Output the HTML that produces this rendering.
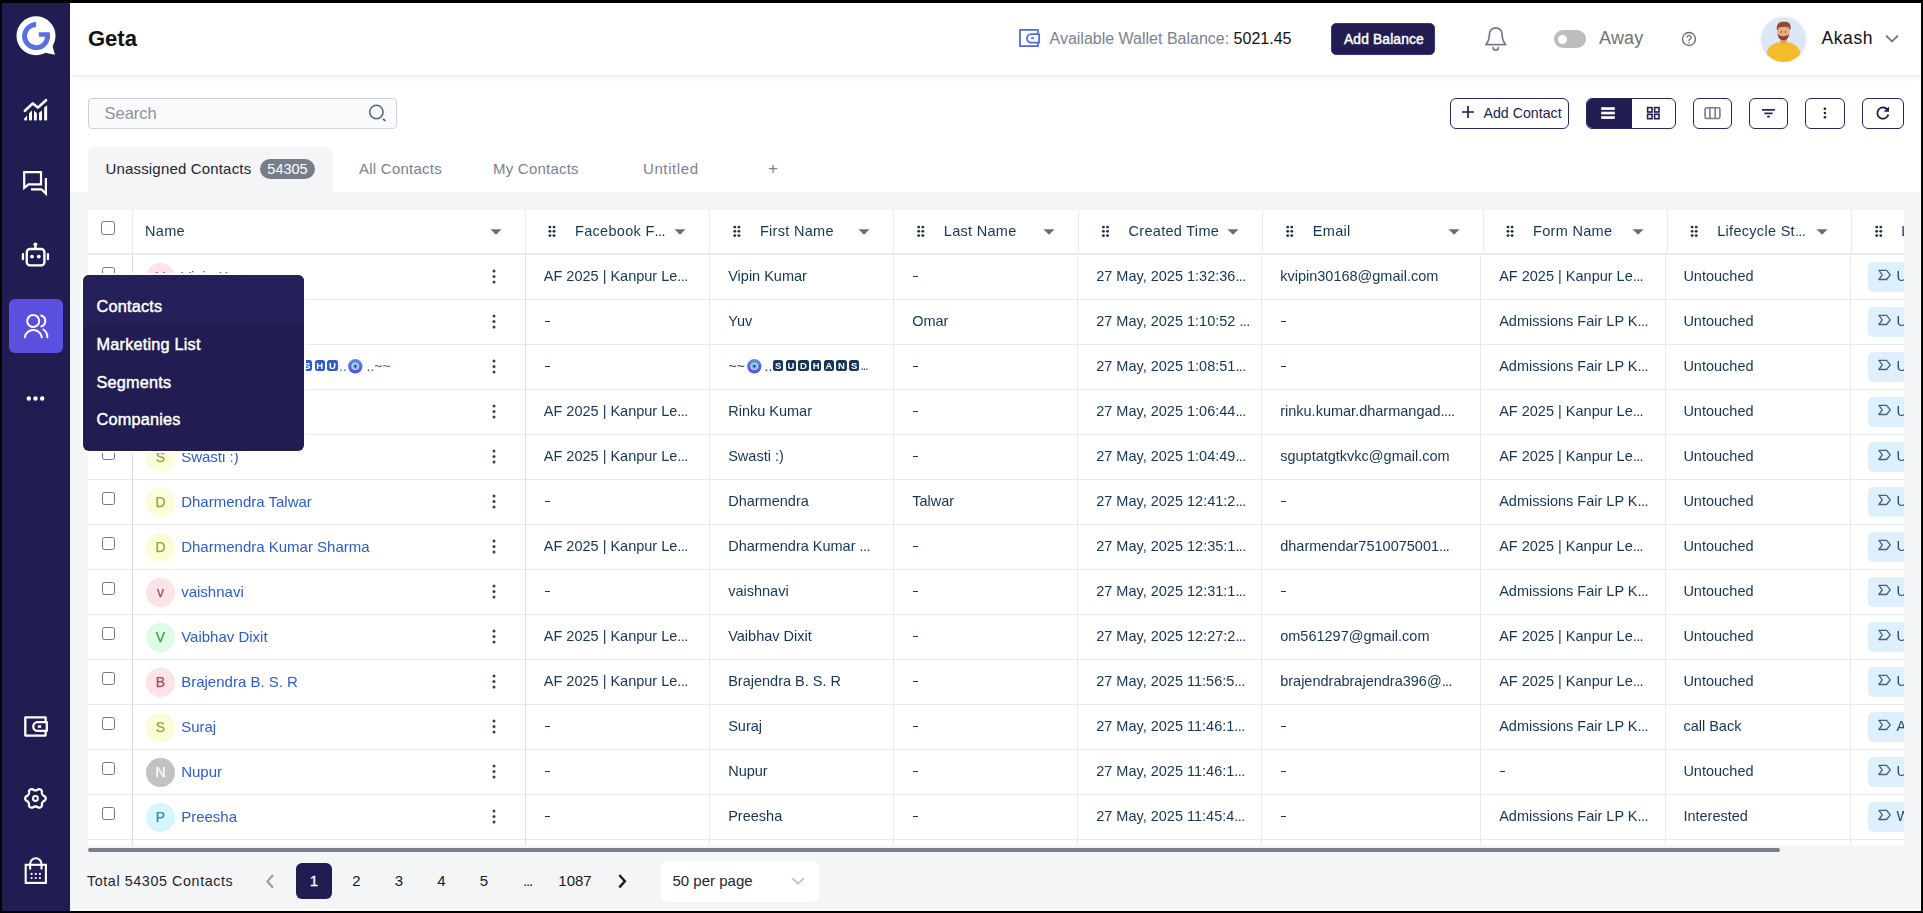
<!DOCTYPE html>
<html><head><meta charset="utf-8">
<style>
*{box-sizing:border-box;margin:0;padding:0}
html,body{width:1923px;height:913px;overflow:hidden;background:#000}
body{font-family:"Liberation Sans",sans-serif;color:#22324a;position:relative}
.a{position:absolute}
.t{position:absolute;white-space:nowrap;line-height:1}
.btn{position:absolute;border:1px solid #2b2662;border-radius:6px;background:#fff}
.c{position:absolute;white-space:nowrap;font-size:14px;line-height:16px;color:#163555}
svg{position:absolute;overflow:visible}
</style></head><body>

<div class="a" style="left:2px;top:2.5px;width:1919px;height:908px;background:#f4f5f7"></div>
<div class="a" style="left:70px;top:909.2px;width:1851px;height:1.3px;background:#fff"></div>
<div class="a" style="left:1920px;top:75px;width:1px;height:835px;background:#fff"></div>
<div class="a" style="left:2px;top:2.5px;width:68px;height:908px;background:#211c52"></div>
<div class="a" style="left:70px;top:75px;width:1851px;height:117px;background:#fff"></div>
<div class="a" style="left:70px;top:2.5px;width:1851px;height:72.5px;background:#fff;box-shadow:0 1px 6px rgba(0,0,0,.1)"></div>
<svg style="left:0;top:0" width="72" height="72" viewBox="0 0 72 72">
<circle cx="36" cy="35.8" r="19.5" fill="#fff"/>
<path d="M51.8 43.5L55 54.8L45 52.8Z" fill="#fff"/>
<path d="M36.1 22.1A14.0 14.0 0 1 0 49.57 32.3H38.8V36.8H45.17A9.1 9.1 0 1 1 36.1 27.0Z" fill="#5a6fe3"/>
</svg>
<svg style="left:0;top:0" width="72" height="140" viewBox="0 0 72 140">
<path d="M24.9 110.8L32.8 103.4L37.9 107.6L46 100.2" fill="none" stroke="#fff" stroke-width="2.6" stroke-linecap="round" stroke-linejoin="round"/>
<g fill="#fff">
<path d="M24.1 118.4L27.1 115.6V119.6a1 1 0 0 1-1 1h-1a1 1 0 0 1-1-1z"/>
<path d="M29 113.2L32 110.4V119.6a1 1 0 0 1-1 1h-1a1 1 0 0 1-1-1z"/>
<path d="M34 110.4L36.9 113.2V119.6a1 1 0 0 1-1 1h-1a1 1 0 0 1-1-1z"/>
<path d="M39 112.8L42 110.4V119.6a1 1 0 0 1-1 1h-1a1 1 0 0 1-1-1z"/>
<path d="M44.2 107.6L47.1 105.2V119.6a1 1 0 0 1-1 1h-1a1 1 0 0 1-1-1z"/>
</g></svg>
<svg style="left:0;top:150" width="72" height="60" viewBox="0 0 72 60">
<g fill="none" stroke="#fff" stroke-width="2.2" stroke-linejoin="miter">
<path d="M24.2 22.1h16.8v12.3h-12.5l-4.3 3.6z"/>
<path d="M45.9 28V43.6L41.4 39.3H31"/>
</g></svg>
<svg style="left:0;top:225" width="72" height="60" viewBox="0 0 72 60">
<g fill="none" stroke="#fff" stroke-width="2.4">
<rect x="26.8" y="24" width="17.6" height="16.4" rx="3.2"/>
<path d="M35.4 19.5v4.5"/>
</g>
<g fill="#fff">
<circle cx="35.4" cy="19.3" r="1.9"/>
<circle cx="32" cy="31.6" r="1.9"/><circle cx="38.8" cy="31.6" r="1.9"/>
<rect x="21.8" y="28" width="2.3" height="7.3" rx="1"/>
<rect x="46.8" y="28" width="2.3" height="7.3" rx="1"/>
</g></svg>
<div class="a" style="left:9px;top:299px;width:54px;height:54px;border-radius:6px;background:#5b4fdd"></div>
<svg style="left:0;top:300" width="72" height="60" viewBox="0 0 72 60">
<g fill="none" stroke="#fff" stroke-width="2" stroke-linecap="round">
<circle cx="33.2" cy="21" r="6"/>
<path d="M24.8 37.3a8.6 8.6 0 0 1 17 0"/>
<path d="M41.3 15.5a5.8 5.8 0 0 1 0 11"/>
<path d="M43.3 29.5a8.6 8.6 0 0 1 4 7.8"/>
</g></svg>
<svg style="left:0;top:390" width="72" height="20" viewBox="0 0 72 20">
<g fill="#fff"><circle cx="28.8" cy="8.5" r="2.2"/><circle cx="35.5" cy="8.5" r="2.2"/><circle cx="42.2" cy="8.5" r="2.2"/></g></svg>
<svg style="left:0;top:705" width="72" height="40" viewBox="0 0 72 40">
<g fill="none" stroke="#fff" stroke-width="2.3" stroke-linejoin="round">
<path d="M45.6 16.2V12.3H25.3V30.6H45.6V27"/>
<path d="M37.6 17.2h9.2v8.7H37.6a4.35 4.35 0 0 1 0-8.7z"/>
</g><rect x="37.8" y="20.3" width="3.4" height="2.5" fill="#fff"/></svg>
<svg style="left:0;top:0" width="72" height="830" viewBox="0 0 72 830">
<g fill="none" stroke="#fff" stroke-width="2.3" stroke-linejoin="round">
<path d="M45.70 798.45 L45.68 798.09 L45.61 797.74 L45.49 797.39 L45.33 797.06 L45.13 796.74 L44.87 796.45 L44.55 796.18 L44.03 795.99 L43.69 795.77 L43.41 795.55 L43.16 795.33 L42.94 795.11 L42.75 794.89 L42.57 794.66 L42.42 794.43 L42.29 794.18 L42.18 793.91 L42.09 793.63 L42.01 793.33 L41.94 793.00 L41.89 792.65 L41.87 792.25 L41.96 791.71 L41.90 791.29 L41.77 790.92 L41.59 790.59 L41.39 790.28 L41.14 790.01 L40.87 789.77 L40.58 789.57 L40.25 789.41 L39.91 789.30 L39.56 789.22 L39.19 789.20 L38.81 789.22 L38.43 789.29 L38.03 789.44 L37.61 789.79 L37.25 789.97 L36.92 790.11 L36.61 790.21 L36.31 790.29 L36.02 790.35 L35.73 790.39 L35.45 790.40 L35.17 790.39 L34.88 790.35 L34.59 790.29 L34.29 790.21 L33.98 790.11 L33.65 789.97 L33.29 789.79 L32.87 789.44 L32.47 789.29 L32.09 789.22 L31.71 789.20 L31.34 789.22 L30.99 789.30 L30.65 789.41 L30.33 789.57 L30.03 789.77 L29.76 790.01 L29.51 790.28 L29.31 790.59 L29.13 790.92 L29.00 791.29 L28.94 791.71 L29.03 792.25 L29.01 792.65 L28.96 793.00 L28.89 793.33 L28.81 793.63 L28.72 793.91 L28.61 794.18 L28.48 794.43 L28.33 794.66 L28.15 794.89 L27.96 795.11 L27.74 795.33 L27.49 795.55 L27.21 795.77 L26.87 795.99 L26.35 796.18 L26.03 796.45 L25.77 796.74 L25.57 797.06 L25.41 797.39 L25.29 797.74 L25.22 798.09 L25.20 798.45 L25.22 798.81 L25.29 799.16 L25.41 799.51 L25.57 799.84 L25.77 800.16 L26.03 800.45 L26.35 800.72 L26.87 800.91 L27.21 801.13 L27.49 801.35 L27.74 801.57 L27.96 801.79 L28.15 802.01 L28.33 802.24 L28.48 802.48 L28.61 802.72 L28.72 802.99 L28.81 803.27 L28.89 803.57 L28.96 803.90 L29.01 804.25 L29.03 804.65 L28.94 805.19 L29.00 805.61 L29.13 805.98 L29.31 806.31 L29.51 806.62 L29.76 806.89 L30.03 807.13 L30.32 807.33 L30.65 807.49 L30.99 807.60 L31.34 807.68 L31.71 807.70 L32.09 807.68 L32.47 807.61 L32.87 807.46 L33.29 807.11 L33.65 806.93 L33.98 806.79 L34.29 806.69 L34.59 806.61 L34.88 806.55 L35.17 806.51 L35.45 806.50 L35.73 806.51 L36.02 806.55 L36.31 806.61 L36.61 806.69 L36.92 806.79 L37.25 806.93 L37.61 807.11 L38.03 807.46 L38.43 807.61 L38.81 807.68 L39.19 807.70 L39.56 807.68 L39.91 807.60 L40.25 807.49 L40.58 807.33 L40.87 807.13 L41.14 806.89 L41.39 806.62 L41.59 806.31 L41.77 805.98 L41.90 805.61 L41.96 805.19 L41.87 804.65 L41.89 804.25 L41.94 803.90 L42.01 803.57 L42.09 803.27 L42.18 802.99 L42.29 802.72 L42.42 802.48 L42.57 802.24 L42.75 802.01 L42.94 801.79 L43.16 801.57 L43.41 801.35 L43.69 801.13 L44.03 800.91 L44.55 800.72 L44.87 800.45 L45.13 800.16 L45.33 799.84 L45.49 799.51 L45.61 799.16 L45.68 798.81Z"/>
<circle cx="35.45" cy="798.45" r="2.45" stroke-width="2"/>
</g></svg>
<svg style="left:0;top:850" width="72" height="40" viewBox="0 0 72 40">
<g fill="none" stroke="#fff" stroke-width="2.1">
<rect x="25.7" y="14.8" width="20.2" height="18.1"/>
<path d="M30.1 19.4V14a5.7 5.7 0 0 1 11.4 0v5.4"/>
</g>
<g fill="#fff">
<circle cx="31.6" cy="23.9" r="1.1"/><circle cx="35.8" cy="23.9" r="1.1"/><circle cx="39.9" cy="23.9" r="1.1"/>
<circle cx="31.6" cy="28" r="1.1"/><circle cx="35.8" cy="28" r="1.1"/><circle cx="39.9" cy="28" r="1.1"/>
</g></svg>
<div class="t" style="left:88px;top:27.5px;font-size:22px;font-weight:bold;color:#111">Geta</div>
<svg style="left:1018;top:28" width="24" height="22" viewBox="0 0 24 22">
<g fill="none" stroke="#4e68e2" stroke-width="1.75" stroke-linejoin="round">
<path d="M19.95 5.6V1.95H1.95V18.15H19.95V14.2"/>
<path d="M13.2 6.05H21.15V14.55H13.2A4.25 4.25 0 0 1 13.2 6.05Z"/>
</g><rect x="13.1" y="9.3" width="2.8" height="1.8" fill="#4e68e2"/></svg>
<div class="t" style="left:1049.5px;top:31px;font-size:16px;color:#7b8191">Available Wallet Balance: <span style="color:#111">5021.45</span></div>
<div class="a" style="left:1331px;top:23px;width:104px;height:32px;border-radius:5px;background:#211c52;border:1px solid #3a3580"></div>
<div class="t" style="left:1344px;top:33px;font-size:13.8px;letter-spacing:.15px;-webkit-text-stroke:.45px #fff;color:#fff">Add Balance</div>
<svg style="left:1480;top:24" width="30" height="30" viewBox="0 0 30 30">
<g fill="none" stroke="#787896" stroke-width="1.75" stroke-linejoin="round" stroke-linecap="round">
<path d="M5.9 20.5H25.7C23.2 17.8 22.3 15 22.1 11V10.2A6.35 6.35 0 0 0 9.4 10.2V11C9.2 15 8.4 17.8 5.9 20.5Z"/>
<path d="M13.1 23.6A2.65 2.65 0 0 0 18.4 23.6"/>
</g></svg>
<div class="a" style="left:1554px;top:30px;width:31.5px;height:18px;border-radius:9px;background:#bdbdbd"></div>
<div class="a" style="left:1557.7px;top:34.7px;width:9.5px;height:9.5px;border-radius:5px;background:#fff"></div>
<div class="t" style="left:1599px;top:29px;font-size:18px;letter-spacing:.2px;color:#727272">Away</div>
<svg style="left:1680;top:31" width="18" height="18" viewBox="0 0 18 18">
<circle cx="9" cy="8" r="6.5" fill="none" stroke="#6a6a6e" stroke-width="1.3"/>
<path d="M7 6.4a2.05 2.05 0 1 1 3 1.9c-.65.4-1 .75-1 1.5v.3" fill="none" stroke="#6a6a6e" stroke-width="1.3"/>
<circle cx="9" cy="11.7" r=".8" fill="#6a6a6e"/></svg>
<div class="a" style="left:1761px;top:17px;width:45px;height:45px;border-radius:50%;box-shadow:0 0 4px rgba(0,0,0,.08)"></div>
<svg style="left:1761;top:17" width="45" height="45" viewBox="0 0 45 45">
<defs><clipPath id="avc"><circle cx="22.5" cy="22.5" r="22.4"/></clipPath></defs>
<circle cx="22.5" cy="22.5" r="22.4" fill="#dbe7f5"/>
<g clip-path="url(#avc)">
<path d="M5.5 46L5.5 37C6.5 29.5 12 26 19 25L22.5 26.5L26 25C33 26 38.5 29.5 39.5 37L39.5 46Z" fill="#f4bb2a"/>
<path d="M19.2 20h6.6v5.6l-3.3 1.6l-3.3-1.6z" fill="#e39a72"/>
<ellipse cx="22.4" cy="15.5" rx="6.2" ry="7.4" fill="#f0ab85"/>
<path d="M15.8 12.5C15.3 6.5 18.5 4.8 22.5 4.8C27 4.5 30.2 6 29.6 11.8L28.8 13.5C28.6 10.2 26 9.6 22.5 9.9C19 9.9 16.9 10.3 16.6 13.5Z" fill="#8d4b2d"/>
<path d="M16.9 16.8C16.9 21.5 19.5 23.3 22.4 23.3C25.3 23.3 27.9 21.5 27.9 16.8C26.6 18.9 24.5 19.2 22.4 19.2C20.3 19.2 18.2 18.9 16.9 16.8Z" fill="#8a452e"/>
<circle cx="20.3" cy="15" r=".65" fill="#3a2a22"/><circle cx="24.5" cy="15" r=".65" fill="#3a2a22"/>
</g></svg>
<div class="t" style="left:1821.5px;top:30px;font-size:17.5px;letter-spacing:.6px;color:#111">Akash</div>
<svg style="left:1880;top:30" width="24" height="20" viewBox="0 0 24 20">
<path d="M6 5.5l6 6l6-6" fill="none" stroke="#777c8c" stroke-width="1.8"/></svg>
<div class="a" style="left:88px;top:98px;width:309px;height:30.5px;border:1px solid #cfd2d9;border-radius:4px;background:#f9fafb"></div>
<div class="t" style="left:104.5px;top:104.5px;font-size:16.5px;color:#8d919b">Search</div>
<svg style="left:366;top:102" width="24" height="24" viewBox="0 0 24 24">
<circle cx="10.4" cy="10" r="6.65" fill="none" stroke="#5a6075" stroke-width="1.5"/>
<path d="M17 17L19.4 18.9" stroke="#5a6075" stroke-width="1.8"/></svg>
<div class="btn" style="left:1450px;top:98px;width:119px;height:30.5px"></div>
<svg style="left:1460;top:104" width="16" height="16" viewBox="0 0 16 16">
<path d="M8 2v12M2 8h12" stroke="#211c52" stroke-width="1.7"/></svg>
<div class="t" style="left:1483.5px;top:105.5px;font-size:14.2px;color:#211c52">Add Contact</div>
<div class="btn" style="left:1586px;top:98px;width:90px;height:30.5px;overflow:hidden"><div class="a" style="left:0;top:0;width:44.5px;height:30px;background:#211c52"></div></div>
<svg style="left:1598;top:103" width="20" height="20" viewBox="0 0 20 20">
<g fill="#fff"><rect x="3.2" y="4.2" width="13.6" height="2.7"/><rect x="3.2" y="8.7" width="13.6" height="2.7"/><rect x="3.2" y="13.2" width="13.6" height="2.7"/></g></svg>
<svg style="left:1643;top:103" width="20" height="20" viewBox="0 0 20 20">
<g fill="none" stroke="#211c52" stroke-width="1.6"><rect x="4.6" y="4.6" width="4.4" height="4.4"/><rect x="11.6" y="4.6" width="4.4" height="4.4"/><rect x="4.6" y="11.3" width="4.4" height="4.4"/><rect x="11.6" y="11.3" width="4.4" height="4.4"/></g></svg>
<div class="btn" style="left:1693px;top:98px;width:39px;height:30.5px"></div>
<svg style="left:1702;top:103" width="22" height="20" viewBox="0 0 22 20">
<g fill="none" stroke="#7b7896" stroke-width="1.6"><rect x="3.1" y="4.8" width="14.8" height="10.7" rx="1.5"/><path d="M7.9 4.8v10.7M13.2 4.8v10.7"/></g></svg>
<div class="btn" style="left:1749px;top:98px;width:39px;height:30.5px"></div>
<svg style="left:1758;top:103" width="22" height="20" viewBox="0 0 22 20">
<g stroke="#2b2660" stroke-width="1.7"><path d="M4 6.9h12.9M6.4 10.3h8.2M9.2 13.7h2.7"/></g></svg>
<div class="btn" style="left:1805px;top:98px;width:39.5px;height:30.5px"></div>
<svg style="left:1814;top:103" width="22" height="20" viewBox="0 0 22 20">
<g fill="#211c52"><circle cx="10.9" cy="5.8" r="1.3"/><circle cx="10.9" cy="10" r="1.3"/><circle cx="10.9" cy="14.2" r="1.3"/></g></svg>
<div class="btn" style="left:1862px;top:98px;width:42px;height:30.5px"></div>
<svg style="left:1872;top:103" width="22" height="20" viewBox="0 0 22 20">
<g fill="none" stroke="#211c52" stroke-width="1.8"><path d="M15.8 7.2a5.6 5.6 0 1 0 .6 4.3"/></g>
<path d="M17 3.5v5.2h-5.2z" fill="#211c52"/></svg>
<div class="a" style="left:88px;top:146.5px;width:245px;height:46px;border-radius:8px 8px 0 0;background:#f4f5f7"></div>
<div class="t" style="left:105.5px;top:161px;font-size:15px;letter-spacing:.17px;color:#1f2430">Unassigned Contacts</div>
<div class="a" style="left:260px;top:159px;width:55px;height:20px;border-radius:10px;background:#787d8b"></div>
<div class="t" style="left:265px;top:162px;width:45px;text-align:center;font-size:14.5px;color:#fff">54305</div>
<div class="t" style="left:359px;top:161px;font-size:15px;letter-spacing:.25px;color:#7b8190">All Contacts</div>
<div class="t" style="left:493px;top:161px;font-size:15px;letter-spacing:.22px;color:#7b8190">My Contacts</div>
<div class="t" style="left:643px;top:161px;font-size:15px;letter-spacing:.6px;color:#7b8190">Untitled</div>
<div class="t" style="left:768px;top:160px;font-size:17px;color:#7b8190">+</div>
<div class="a" style="left:88px;top:210px;width:1816px;height:635px;background:#fff;overflow:hidden;will-change:transform" id="tbl">
<div class="a" style="left:0;top:43px;width:1816px;height:2px;background:#e7eaef"></div>
<div class="a" style="left:0;top:89px;width:1816px;height:1px;background:#e7eaef"></div>
<div class="a" style="left:0;top:134px;width:1816px;height:1px;background:#e7eaef"></div>
<div class="a" style="left:0;top:179px;width:1816px;height:1px;background:#e7eaef"></div>
<div class="a" style="left:0;top:224px;width:1816px;height:1px;background:#e7eaef"></div>
<div class="a" style="left:0;top:269px;width:1816px;height:1px;background:#e7eaef"></div>
<div class="a" style="left:0;top:314px;width:1816px;height:1px;background:#e7eaef"></div>
<div class="a" style="left:0;top:359px;width:1816px;height:1px;background:#e7eaef"></div>
<div class="a" style="left:0;top:404px;width:1816px;height:1px;background:#e7eaef"></div>
<div class="a" style="left:0;top:449px;width:1816px;height:1px;background:#e7eaef"></div>
<div class="a" style="left:0;top:494px;width:1816px;height:1px;background:#e7eaef"></div>
<div class="a" style="left:0;top:539px;width:1816px;height:1px;background:#e7eaef"></div>
<div class="a" style="left:0;top:584px;width:1816px;height:1px;background:#e7eaef"></div>
<div class="a" style="left:0;top:629px;width:1816px;height:1px;background:#e7eaef"></div>
<div class="a" style="left:43.69999999999999px;top:0;width:1px;height:43px;background:#e7eaef"></div>
<div class="a" style="left:436.5px;top:0;width:1px;height:43px;background:#e7eaef"></div>
<div class="a" style="left:621.4px;top:0;width:1px;height:43px;background:#e7eaef"></div>
<div class="a" style="left:805.3px;top:0;width:1px;height:43px;background:#e7eaef"></div>
<div class="a" style="left:990px;top:0;width:1px;height:43px;background:#e7eaef"></div>
<div class="a" style="left:1174.3px;top:0;width:1px;height:43px;background:#e7eaef"></div>
<div class="a" style="left:1394.6px;top:0;width:1px;height:43px;background:#e7eaef"></div>
<div class="a" style="left:1578.7px;top:0;width:1px;height:43px;background:#e7eaef"></div>
<div class="a" style="left:1763.3px;top:0;width:1px;height:43px;background:#e7eaef"></div>
<div class="a" style="left:44.400000000000006px;top:45px;width:1px;height:590px;background:#dfdfdf"></div>
<div class="a" style="left:437px;top:45px;width:1px;height:590px;background:#dfdfdf"></div>
<div class="a" style="left:621.4px;top:45px;width:1px;height:590px;background:#e7eaef"></div>
<div class="a" style="left:805.4px;top:45px;width:1px;height:590px;background:#e7eaef"></div>
<div class="a" style="left:989.4000000000001px;top:45px;width:1px;height:590px;background:#e7eaef"></div>
<div class="a" style="left:1173.4px;top:45px;width:1px;height:590px;background:#e7eaef"></div>
<div class="a" style="left:1392.4px;top:45px;width:1px;height:590px;background:#e7eaef"></div>
<div class="a" style="left:1576.6px;top:45px;width:1px;height:590px;background:#e7eaef"></div>
<div class="a" style="left:1761.5px;top:45px;width:1px;height:590px;background:#e7eaef"></div>
<div class="a" style="left:12.5px;top:11.300000000000011px;width:14px;height:14px;border:1.2px solid #767676;border-radius:3px"></div>
<div class="c" style="left:57px;top:12.800000000000011px;font-size:14.5px;letter-spacing:.3px">Name</div>
<svg style="left:402px;top:18px" width="12" height="8" viewBox="0 0 12 8"><path d="M0.5 1.2h11l-5.5 5.6z" fill="#6a6d72"/></svg>
<svg style="left:0;top:0" width="1816" height="60" viewBox="0 0 1816 60"><g fill="#22324a"><circle cx="461.90" cy="17.10" r="1.45"/><circle cx="461.90" cy="21.35" r="1.45"/><circle cx="461.90" cy="25.60" r="1.45"/><circle cx="466.00" cy="17.10" r="1.45"/><circle cx="466.00" cy="21.35" r="1.45"/><circle cx="466.00" cy="25.60" r="1.45"/><circle cx="646.80" cy="17.10" r="1.45"/><circle cx="646.80" cy="21.35" r="1.45"/><circle cx="646.80" cy="25.60" r="1.45"/><circle cx="650.90" cy="17.10" r="1.45"/><circle cx="650.90" cy="21.35" r="1.45"/><circle cx="650.90" cy="25.60" r="1.45"/><circle cx="830.70" cy="17.10" r="1.45"/><circle cx="830.70" cy="21.35" r="1.45"/><circle cx="830.70" cy="25.60" r="1.45"/><circle cx="834.80" cy="17.10" r="1.45"/><circle cx="834.80" cy="21.35" r="1.45"/><circle cx="834.80" cy="25.60" r="1.45"/><circle cx="1015.40" cy="17.10" r="1.45"/><circle cx="1015.40" cy="21.35" r="1.45"/><circle cx="1015.40" cy="25.60" r="1.45"/><circle cx="1019.50" cy="17.10" r="1.45"/><circle cx="1019.50" cy="21.35" r="1.45"/><circle cx="1019.50" cy="25.60" r="1.45"/><circle cx="1199.70" cy="17.10" r="1.45"/><circle cx="1199.70" cy="21.35" r="1.45"/><circle cx="1199.70" cy="25.60" r="1.45"/><circle cx="1203.80" cy="17.10" r="1.45"/><circle cx="1203.80" cy="21.35" r="1.45"/><circle cx="1203.80" cy="25.60" r="1.45"/><circle cx="1420.00" cy="17.10" r="1.45"/><circle cx="1420.00" cy="21.35" r="1.45"/><circle cx="1420.00" cy="25.60" r="1.45"/><circle cx="1424.10" cy="17.10" r="1.45"/><circle cx="1424.10" cy="21.35" r="1.45"/><circle cx="1424.10" cy="25.60" r="1.45"/><circle cx="1604.10" cy="17.10" r="1.45"/><circle cx="1604.10" cy="21.35" r="1.45"/><circle cx="1604.10" cy="25.60" r="1.45"/><circle cx="1608.20" cy="17.10" r="1.45"/><circle cx="1608.20" cy="21.35" r="1.45"/><circle cx="1608.20" cy="25.60" r="1.45"/><circle cx="1788.70" cy="17.10" r="1.45"/><circle cx="1788.70" cy="21.35" r="1.45"/><circle cx="1788.70" cy="25.60" r="1.45"/><circle cx="1792.80" cy="17.10" r="1.45"/><circle cx="1792.80" cy="21.35" r="1.45"/><circle cx="1792.80" cy="25.60" r="1.45"/></g></svg>
<div class="c" style="left:487.0px;top:12.800000000000011px;font-size:14.5px;letter-spacing:.3px">Facebook F<span style="letter-spacing:-.6px">...</span></div>
<svg style="left:586.4px;top:18px" width="12" height="8" viewBox="0 0 12 8"><path d="M0.5 1.2h11l-5.5 5.6z" fill="#6a6d72"/></svg>
<div class="c" style="left:671.9px;top:12.800000000000011px;font-size:14.5px;letter-spacing:.3px">First Name</div>
<svg style="left:770.3px;top:18px" width="12" height="8" viewBox="0 0 12 8"><path d="M0.5 1.2h11l-5.5 5.6z" fill="#6a6d72"/></svg>
<div class="c" style="left:855.8px;top:12.800000000000011px;font-size:14.5px;letter-spacing:.3px">Last Name</div>
<svg style="left:955px;top:18px" width="12" height="8" viewBox="0 0 12 8"><path d="M0.5 1.2h11l-5.5 5.6z" fill="#6a6d72"/></svg>
<div class="c" style="left:1040.5px;top:12.800000000000011px;font-size:14.5px;letter-spacing:.3px">Created Time</div>
<svg style="left:1139.3px;top:18px" width="12" height="8" viewBox="0 0 12 8"><path d="M0.5 1.2h11l-5.5 5.6z" fill="#6a6d72"/></svg>
<div class="c" style="left:1224.8px;top:12.800000000000011px;font-size:14.5px;letter-spacing:.3px">Email</div>
<svg style="left:1359.6px;top:18px" width="12" height="8" viewBox="0 0 12 8"><path d="M0.5 1.2h11l-5.5 5.6z" fill="#6a6d72"/></svg>
<div class="c" style="left:1445.1px;top:12.800000000000011px;font-size:14.5px;letter-spacing:.3px">Form Name</div>
<svg style="left:1543.7px;top:18px" width="12" height="8" viewBox="0 0 12 8"><path d="M0.5 1.2h11l-5.5 5.6z" fill="#6a6d72"/></svg>
<div class="c" style="left:1629.2px;top:12.800000000000011px;font-size:14.5px;letter-spacing:.3px">Lifecycle St<span style="letter-spacing:-.6px">...</span></div>
<svg style="left:1728.3px;top:18px" width="12" height="8" viewBox="0 0 12 8"><path d="M0.5 1.2h11l-5.5 5.6z" fill="#6a6d72"/></svg>
<div class="c" style="left:1813.3px;top:12.800000000000011px;font-size:14.5px;letter-spacing:.3px">Lifecycle</div>
<div class="a" style="left:14px;top:56.5px;width:13px;height:13px;border:1px solid #767676;border-radius:2.5px"></div>
<div class="a" style="left:58.19999999999999px;top:53px;width:28.5px;height:28.5px;border-radius:50%;background:#fde2e7;color:#a0525f;font-size:14px;line-height:28.5px;text-align:center;-webkit-text-stroke:.25px #a0525f">V</div>
<div class="c" style="left:93.19999999999999px;top:59px;color:#2d5ccf;font-size:15px">Vipin Kumar</div>
<svg style="left:403px;top:58px" width="6" height="18" viewBox="0 0 6 18"><g fill="#36404f"><circle cx="3" cy="3" r="1.5"/><circle cx="3" cy="8.5" r="1.5"/><circle cx="3" cy="14" r="1.5"/></g></svg>
<div class="c" style="left:455.8px;top:58.10000000000002px;font-size:14.5px">AF 2025 | Kanpur Le<span style="letter-spacing:-.6px">...</span></div>
<div class="c" style="left:640.1999999999999px;top:58.10000000000002px;font-size:14.5px">Vipin Kumar</div>
<div class="a" style="left:825.0px;top:65.5px;width:5.4px;height:1.6px;background:#1b3657"></div>
<div class="c" style="left:1008.2px;top:58.10000000000002px;font-size:14.5px">27 May, 2025 1:32:36<span style="letter-spacing:-.6px">...</span></div>
<div class="c" style="left:1192.2px;top:58.10000000000002px;font-size:14.5px">kvipin30168@gmail.com</div>
<div class="c" style="left:1411.2px;top:58.10000000000002px;font-size:14.5px">AF 2025 | Kanpur Le<span style="letter-spacing:-.6px">...</span></div>
<div class="c" style="left:1595.3999999999999px;top:58.10000000000002px;font-size:14.5px">Untouched</div>
<div class="a" style="left:1780px;top:52.30000000000001px;width:60px;height:30px;border-radius:5px;background:#dff0fd"></div>
<svg style="left:1788px;top:56.5px" width="18" height="16" viewBox="0 0 18 16"><path d="M2.9 3.4H10.6L14.3 7.95L10.6 12.5H2.9L6.3 7.95Z" fill="none" stroke="#42607f" stroke-width="1.3" stroke-linejoin="round"/></svg>
<div class="c" style="left:1808.5px;top:58.10000000000002px;font-size:14.5px;color:#2a4a6b">U</div>
<div class="a" style="left:14px;top:101.5px;width:13px;height:13px;border:1px solid #767676;border-radius:2.5px"></div>
<div class="a" style="left:58.19999999999999px;top:98px;width:28.5px;height:28.5px;border-radius:50%;background:#fde2e7;color:#a0525f;font-size:14px;line-height:28.5px;text-align:center;-webkit-text-stroke:.25px #a0525f">Y</div>
<div class="c" style="left:93.19999999999999px;top:104px;color:#2d5ccf;font-size:15px">Yuv Omar</div>
<svg style="left:403px;top:103px" width="6" height="18" viewBox="0 0 6 18"><g fill="#36404f"><circle cx="3" cy="3" r="1.5"/><circle cx="3" cy="8.5" r="1.5"/><circle cx="3" cy="14" r="1.5"/></g></svg>
<div class="a" style="left:456.6px;top:110.5px;width:5.4px;height:1.6px;background:#1b3657"></div>
<div class="c" style="left:640.1999999999999px;top:103.10000000000002px;font-size:14.5px">Yuv</div>
<div class="c" style="left:824.1999999999999px;top:103.10000000000002px;font-size:14.5px">Omar</div>
<div class="c" style="left:1008.2px;top:103.10000000000002px;font-size:14.5px">27 May, 2025 1:10:52 <span style="letter-spacing:-.6px">...</span></div>
<div class="a" style="left:1193.0px;top:110.5px;width:5.4px;height:1.6px;background:#1b3657"></div>
<div class="c" style="left:1411.2px;top:103.10000000000002px;font-size:14.5px">Admissions Fair LP K<span style="letter-spacing:-.6px">...</span></div>
<div class="c" style="left:1595.3999999999999px;top:103.10000000000002px;font-size:14.5px">Untouched</div>
<div class="a" style="left:1780px;top:97.30000000000001px;width:60px;height:30px;border-radius:5px;background:#dff0fd"></div>
<svg style="left:1788px;top:101.5px" width="18" height="16" viewBox="0 0 18 16"><path d="M2.9 3.4H10.6L14.3 7.95L10.6 12.5H2.9L6.3 7.95Z" fill="none" stroke="#42607f" stroke-width="1.3" stroke-linejoin="round"/></svg>
<div class="c" style="left:1808.5px;top:103.10000000000002px;font-size:14.5px;color:#2a4a6b">U</div>
<div class="a" style="left:14px;top:146.5px;width:13px;height:13px;border:1px solid #767676;border-radius:2.5px"></div>
<div class="a" style="left:58.19999999999999px;top:143px;width:28.5px;height:28.5px;border-radius:50%;background:#fafdd8;color:#99a33a;font-size:14px;line-height:28.5px;text-align:center;-webkit-text-stroke:.25px #99a33a">S</div>
<div class="a" style="left:214px;top:150px;width:10.2px;height:11px;border-radius:2.5px;background:#2d5ccf;color:#fff;font-size:9.5px;line-height:11px;text-align:center;font-weight:bold">S</div>
<div class="a" style="left:226.7px;top:150px;width:10.2px;height:11px;border-radius:2.5px;background:#2d5ccf;color:#fff;font-size:9.5px;line-height:11px;text-align:center;font-weight:bold">H</div>
<div class="a" style="left:239.39999999999998px;top:150px;width:10.2px;height:11px;border-radius:2.5px;background:#2d5ccf;color:#fff;font-size:9.5px;line-height:11px;text-align:center;font-weight:bold">U</div>
<div class="c" style="left:251px;top:148px;color:#2d5ccf;font-size:14px">..</div>
<svg style="left:260.4px;top:148.5px" width="14.6" height="14.6" viewBox="0 0 14.6 14.6"><defs><linearGradient id="nz1" x1="0" y1="0" x2="0" y2="1"><stop offset="0" stop-color="#5b8fe0"/><stop offset="1" stop-color="#5a4fe6"/></linearGradient></defs><circle cx="7.3" cy="7.3" r="7.2" fill="url(#nz1)"/><circle cx="7.3" cy="7.3" r="3.8" fill="#e8d5f7"/><circle cx="7.3" cy="7.3" r="2.7" fill="#4fc3ef"/><circle cx="7.3" cy="7.3" r="1.1" fill="#3a1a2a"/></svg>
<div class="c" style="left:278.5px;top:148px;color:#2d5ccf;font-size:14px">..~~</div>
<svg style="left:403px;top:148px" width="6" height="18" viewBox="0 0 6 18"><g fill="#36404f"><circle cx="3" cy="3" r="1.5"/><circle cx="3" cy="8.5" r="1.5"/><circle cx="3" cy="14" r="1.5"/></g></svg>
<div class="a" style="left:456.6px;top:155.5px;width:5.4px;height:1.6px;background:#1b3657"></div>
<div class="c" style="left:640.5px;top:148px;font-size:14px">~~</div>
<svg style="left:658.8000000000001px;top:148.5px" width="14.6" height="14.6" viewBox="0 0 14.6 14.6"><defs><linearGradient id="nz2" x1="0" y1="0" x2="0" y2="1"><stop offset="0" stop-color="#5b8fe0"/><stop offset="1" stop-color="#5a4fe6"/></linearGradient></defs><circle cx="7.3" cy="7.3" r="7.2" fill="url(#nz2)"/><circle cx="7.3" cy="7.3" r="3.8" fill="#e8d5f7"/><circle cx="7.3" cy="7.3" r="2.7" fill="#4fc3ef"/><circle cx="7.3" cy="7.3" r="1.1" fill="#3a1a2a"/></svg>
<div class="c" style="left:676.5px;top:148px;font-size:14px">..</div>
<div class="a" style="left:685.2px;top:150px;width:10.2px;height:11px;border-radius:2.5px;background:#16365a;color:#fff;font-size:9.5px;line-height:11px;text-align:center;font-weight:bold">S</div>
<div class="a" style="left:697.83px;top:150px;width:10.2px;height:11px;border-radius:2.5px;background:#16365a;color:#fff;font-size:9.5px;line-height:11px;text-align:center;font-weight:bold">U</div>
<div class="a" style="left:710.46px;top:150px;width:10.2px;height:11px;border-radius:2.5px;background:#16365a;color:#fff;font-size:9.5px;line-height:11px;text-align:center;font-weight:bold">D</div>
<div class="a" style="left:723.09px;top:150px;width:10.2px;height:11px;border-radius:2.5px;background:#16365a;color:#fff;font-size:9.5px;line-height:11px;text-align:center;font-weight:bold">H</div>
<div class="a" style="left:735.72px;top:150px;width:10.2px;height:11px;border-radius:2.5px;background:#16365a;color:#fff;font-size:9.5px;line-height:11px;text-align:center;font-weight:bold">A</div>
<div class="a" style="left:748.35px;top:150px;width:10.2px;height:11px;border-radius:2.5px;background:#16365a;color:#fff;font-size:9.5px;line-height:11px;text-align:center;font-weight:bold">N</div>
<div class="a" style="left:760.98px;top:150px;width:10.2px;height:11px;border-radius:2.5px;background:#16365a;color:#fff;font-size:9.5px;line-height:11px;text-align:center;font-weight:bold">S</div>
<div class="c" style="left:772.5px;top:148px;font-size:12px;letter-spacing:-1px">...</div>
<div class="a" style="left:825.0px;top:155.5px;width:5.4px;height:1.6px;background:#1b3657"></div>
<div class="c" style="left:1008.2px;top:148.10000000000002px;font-size:14.5px">27 May, 2025 1:08:51<span style="letter-spacing:-.6px">...</span></div>
<div class="a" style="left:1193.0px;top:155.5px;width:5.4px;height:1.6px;background:#1b3657"></div>
<div class="c" style="left:1411.2px;top:148.10000000000002px;font-size:14.5px">Admissions Fair LP K<span style="letter-spacing:-.6px">...</span></div>
<div class="c" style="left:1595.3999999999999px;top:148.10000000000002px;font-size:14.5px">Untouched</div>
<div class="a" style="left:1780px;top:142.3px;width:60px;height:30px;border-radius:5px;background:#dff0fd"></div>
<svg style="left:1788px;top:146.5px" width="18" height="16" viewBox="0 0 18 16"><path d="M2.9 3.4H10.6L14.3 7.95L10.6 12.5H2.9L6.3 7.95Z" fill="none" stroke="#42607f" stroke-width="1.3" stroke-linejoin="round"/></svg>
<div class="c" style="left:1808.5px;top:148.10000000000002px;font-size:14.5px;color:#2a4a6b">U</div>
<div class="a" style="left:14px;top:191.5px;width:13px;height:13px;border:1px solid #767676;border-radius:2.5px"></div>
<div class="a" style="left:58.19999999999999px;top:188px;width:28.5px;height:28.5px;border-radius:50%;background:#fde2e7;color:#a0525f;font-size:14px;line-height:28.5px;text-align:center;-webkit-text-stroke:.25px #a0525f">R</div>
<div class="c" style="left:93.19999999999999px;top:194px;color:#2d5ccf;font-size:15px">Rinku Kumar</div>
<svg style="left:403px;top:193px" width="6" height="18" viewBox="0 0 6 18"><g fill="#36404f"><circle cx="3" cy="3" r="1.5"/><circle cx="3" cy="8.5" r="1.5"/><circle cx="3" cy="14" r="1.5"/></g></svg>
<div class="c" style="left:455.8px;top:193.10000000000002px;font-size:14.5px">AF 2025 | Kanpur Le<span style="letter-spacing:-.6px">...</span></div>
<div class="c" style="left:640.1999999999999px;top:193.10000000000002px;font-size:14.5px">Rinku Kumar</div>
<div class="a" style="left:825.0px;top:200.5px;width:5.4px;height:1.6px;background:#1b3657"></div>
<div class="c" style="left:1008.2px;top:193.10000000000002px;font-size:14.5px">27 May, 2025 1:06:44<span style="letter-spacing:-.6px">...</span></div>
<div class="c" style="left:1192.2px;top:193.10000000000002px;font-size:14.5px">rinku.kumar.dharmangad<span style="letter-spacing:-.6px">...</span>.</div>
<div class="c" style="left:1411.2px;top:193.10000000000002px;font-size:14.5px">AF 2025 | Kanpur Le<span style="letter-spacing:-.6px">...</span></div>
<div class="c" style="left:1595.3999999999999px;top:193.10000000000002px;font-size:14.5px">Untouched</div>
<div class="a" style="left:1780px;top:187.3px;width:60px;height:30px;border-radius:5px;background:#dff0fd"></div>
<svg style="left:1788px;top:191.5px" width="18" height="16" viewBox="0 0 18 16"><path d="M2.9 3.4H10.6L14.3 7.95L10.6 12.5H2.9L6.3 7.95Z" fill="none" stroke="#42607f" stroke-width="1.3" stroke-linejoin="round"/></svg>
<div class="c" style="left:1808.5px;top:193.10000000000002px;font-size:14.5px;color:#2a4a6b">U</div>
<div class="a" style="left:14px;top:236.5px;width:13px;height:13px;border:1px solid #767676;border-radius:2.5px"></div>
<div class="a" style="left:58.19999999999999px;top:233px;width:28.5px;height:28.5px;border-radius:50%;background:#fafdd8;color:#99a33a;font-size:14px;line-height:28.5px;text-align:center;-webkit-text-stroke:.25px #99a33a">S</div>
<div class="c" style="left:93.19999999999999px;top:239px;color:#2d5ccf;font-size:15px">Swasti :)</div>
<svg style="left:403px;top:238px" width="6" height="18" viewBox="0 0 6 18"><g fill="#36404f"><circle cx="3" cy="3" r="1.5"/><circle cx="3" cy="8.5" r="1.5"/><circle cx="3" cy="14" r="1.5"/></g></svg>
<div class="c" style="left:455.8px;top:238.10000000000002px;font-size:14.5px">AF 2025 | Kanpur Le<span style="letter-spacing:-.6px">...</span></div>
<div class="c" style="left:640.1999999999999px;top:238.10000000000002px;font-size:14.5px">Swasti :)</div>
<div class="a" style="left:825.0px;top:245.5px;width:5.4px;height:1.6px;background:#1b3657"></div>
<div class="c" style="left:1008.2px;top:238.10000000000002px;font-size:14.5px">27 May, 2025 1:04:49<span style="letter-spacing:-.6px">...</span></div>
<div class="c" style="left:1192.2px;top:238.10000000000002px;font-size:14.5px">sguptatgtkvkc@gmail.com</div>
<div class="c" style="left:1411.2px;top:238.10000000000002px;font-size:14.5px">AF 2025 | Kanpur Le<span style="letter-spacing:-.6px">...</span></div>
<div class="c" style="left:1595.3999999999999px;top:238.10000000000002px;font-size:14.5px">Untouched</div>
<div class="a" style="left:1780px;top:232.3px;width:60px;height:30px;border-radius:5px;background:#dff0fd"></div>
<svg style="left:1788px;top:236.5px" width="18" height="16" viewBox="0 0 18 16"><path d="M2.9 3.4H10.6L14.3 7.95L10.6 12.5H2.9L6.3 7.95Z" fill="none" stroke="#42607f" stroke-width="1.3" stroke-linejoin="round"/></svg>
<div class="c" style="left:1808.5px;top:238.10000000000002px;font-size:14.5px;color:#2a4a6b">U</div>
<div class="a" style="left:14px;top:281.5px;width:13px;height:13px;border:1px solid #767676;border-radius:2.5px"></div>
<div class="a" style="left:58.19999999999999px;top:278px;width:28.5px;height:28.5px;border-radius:50%;background:#fafdd8;color:#99a33a;font-size:14px;line-height:28.5px;text-align:center;-webkit-text-stroke:.25px #99a33a">D</div>
<div class="c" style="left:93.19999999999999px;top:284px;color:#2d5ccf;font-size:15px">Dharmendra Talwar</div>
<svg style="left:403px;top:283px" width="6" height="18" viewBox="0 0 6 18"><g fill="#36404f"><circle cx="3" cy="3" r="1.5"/><circle cx="3" cy="8.5" r="1.5"/><circle cx="3" cy="14" r="1.5"/></g></svg>
<div class="a" style="left:456.6px;top:290.5px;width:5.4px;height:1.6px;background:#1b3657"></div>
<div class="c" style="left:640.1999999999999px;top:283.1px;font-size:14.5px">Dharmendra</div>
<div class="c" style="left:824.1999999999999px;top:283.1px;font-size:14.5px">Talwar</div>
<div class="c" style="left:1008.2px;top:283.1px;font-size:14.5px">27 May, 2025 12:41:2<span style="letter-spacing:-.6px">...</span></div>
<div class="a" style="left:1193.0px;top:290.5px;width:5.4px;height:1.6px;background:#1b3657"></div>
<div class="c" style="left:1411.2px;top:283.1px;font-size:14.5px">Admissions Fair LP K<span style="letter-spacing:-.6px">...</span></div>
<div class="c" style="left:1595.3999999999999px;top:283.1px;font-size:14.5px">Untouched</div>
<div class="a" style="left:1780px;top:277.3px;width:60px;height:30px;border-radius:5px;background:#dff0fd"></div>
<svg style="left:1788px;top:281.5px" width="18" height="16" viewBox="0 0 18 16"><path d="M2.9 3.4H10.6L14.3 7.95L10.6 12.5H2.9L6.3 7.95Z" fill="none" stroke="#42607f" stroke-width="1.3" stroke-linejoin="round"/></svg>
<div class="c" style="left:1808.5px;top:283.1px;font-size:14.5px;color:#2a4a6b">U</div>
<div class="a" style="left:14px;top:326.5px;width:13px;height:13px;border:1px solid #767676;border-radius:2.5px"></div>
<div class="a" style="left:58.19999999999999px;top:323px;width:28.5px;height:28.5px;border-radius:50%;background:#fafdd8;color:#99a33a;font-size:14px;line-height:28.5px;text-align:center;-webkit-text-stroke:.25px #99a33a">D</div>
<div class="c" style="left:93.19999999999999px;top:329px;color:#2d5ccf;font-size:15px">Dharmendra Kumar Sharma</div>
<svg style="left:403px;top:328px" width="6" height="18" viewBox="0 0 6 18"><g fill="#36404f"><circle cx="3" cy="3" r="1.5"/><circle cx="3" cy="8.5" r="1.5"/><circle cx="3" cy="14" r="1.5"/></g></svg>
<div class="c" style="left:455.8px;top:328.1px;font-size:14.5px">AF 2025 | Kanpur Le<span style="letter-spacing:-.6px">...</span></div>
<div class="c" style="left:640.1999999999999px;top:328.1px;font-size:14.5px">Dharmendra Kumar <span style="letter-spacing:-.6px">...</span></div>
<div class="a" style="left:825.0px;top:335.5px;width:5.4px;height:1.6px;background:#1b3657"></div>
<div class="c" style="left:1008.2px;top:328.1px;font-size:14.5px">27 May, 2025 12:35:1<span style="letter-spacing:-.6px">...</span></div>
<div class="c" style="left:1192.2px;top:328.1px;font-size:14.5px">dharmendar7510075001<span style="letter-spacing:-.6px">...</span></div>
<div class="c" style="left:1411.2px;top:328.1px;font-size:14.5px">AF 2025 | Kanpur Le<span style="letter-spacing:-.6px">...</span></div>
<div class="c" style="left:1595.3999999999999px;top:328.1px;font-size:14.5px">Untouched</div>
<div class="a" style="left:1780px;top:322.29999999999995px;width:60px;height:30px;border-radius:5px;background:#dff0fd"></div>
<svg style="left:1788px;top:326.5px" width="18" height="16" viewBox="0 0 18 16"><path d="M2.9 3.4H10.6L14.3 7.95L10.6 12.5H2.9L6.3 7.95Z" fill="none" stroke="#42607f" stroke-width="1.3" stroke-linejoin="round"/></svg>
<div class="c" style="left:1808.5px;top:328.1px;font-size:14.5px;color:#2a4a6b">U</div>
<div class="a" style="left:14px;top:371.5px;width:13px;height:13px;border:1px solid #767676;border-radius:2.5px"></div>
<div class="a" style="left:58.19999999999999px;top:368px;width:28.5px;height:28.5px;border-radius:50%;background:#fde2e7;color:#a0525f;font-size:14px;line-height:28.5px;text-align:center;-webkit-text-stroke:.25px #a0525f">v</div>
<div class="c" style="left:93.19999999999999px;top:374px;color:#2d5ccf;font-size:15px">vaishnavi</div>
<svg style="left:403px;top:373px" width="6" height="18" viewBox="0 0 6 18"><g fill="#36404f"><circle cx="3" cy="3" r="1.5"/><circle cx="3" cy="8.5" r="1.5"/><circle cx="3" cy="14" r="1.5"/></g></svg>
<div class="a" style="left:456.6px;top:380.5px;width:5.4px;height:1.6px;background:#1b3657"></div>
<div class="c" style="left:640.1999999999999px;top:373.1px;font-size:14.5px">vaishnavi</div>
<div class="a" style="left:825.0px;top:380.5px;width:5.4px;height:1.6px;background:#1b3657"></div>
<div class="c" style="left:1008.2px;top:373.1px;font-size:14.5px">27 May, 2025 12:31:1<span style="letter-spacing:-.6px">...</span></div>
<div class="a" style="left:1193.0px;top:380.5px;width:5.4px;height:1.6px;background:#1b3657"></div>
<div class="c" style="left:1411.2px;top:373.1px;font-size:14.5px">Admissions Fair LP K<span style="letter-spacing:-.6px">...</span></div>
<div class="c" style="left:1595.3999999999999px;top:373.1px;font-size:14.5px">Untouched</div>
<div class="a" style="left:1780px;top:367.29999999999995px;width:60px;height:30px;border-radius:5px;background:#dff0fd"></div>
<svg style="left:1788px;top:371.5px" width="18" height="16" viewBox="0 0 18 16"><path d="M2.9 3.4H10.6L14.3 7.95L10.6 12.5H2.9L6.3 7.95Z" fill="none" stroke="#42607f" stroke-width="1.3" stroke-linejoin="round"/></svg>
<div class="c" style="left:1808.5px;top:373.1px;font-size:14.5px;color:#2a4a6b">U</div>
<div class="a" style="left:14px;top:416.5px;width:13px;height:13px;border:1px solid #767676;border-radius:2.5px"></div>
<div class="a" style="left:58.19999999999999px;top:413px;width:28.5px;height:28.5px;border-radius:50%;background:#dcfce3;color:#4b9a5c;font-size:14px;line-height:28.5px;text-align:center;-webkit-text-stroke:.25px #4b9a5c">V</div>
<div class="c" style="left:93.19999999999999px;top:419px;color:#2d5ccf;font-size:15px">Vaibhav Dixit</div>
<svg style="left:403px;top:418px" width="6" height="18" viewBox="0 0 6 18"><g fill="#36404f"><circle cx="3" cy="3" r="1.5"/><circle cx="3" cy="8.5" r="1.5"/><circle cx="3" cy="14" r="1.5"/></g></svg>
<div class="c" style="left:455.8px;top:418.1px;font-size:14.5px">AF 2025 | Kanpur Le<span style="letter-spacing:-.6px">...</span></div>
<div class="c" style="left:640.1999999999999px;top:418.1px;font-size:14.5px">Vaibhav Dixit</div>
<div class="a" style="left:825.0px;top:425.5px;width:5.4px;height:1.6px;background:#1b3657"></div>
<div class="c" style="left:1008.2px;top:418.1px;font-size:14.5px">27 May, 2025 12:27:2<span style="letter-spacing:-.6px">...</span></div>
<div class="c" style="left:1192.2px;top:418.1px;font-size:14.5px">om561297@gmail.com</div>
<div class="c" style="left:1411.2px;top:418.1px;font-size:14.5px">AF 2025 | Kanpur Le<span style="letter-spacing:-.6px">...</span></div>
<div class="c" style="left:1595.3999999999999px;top:418.1px;font-size:14.5px">Untouched</div>
<div class="a" style="left:1780px;top:412.29999999999995px;width:60px;height:30px;border-radius:5px;background:#dff0fd"></div>
<svg style="left:1788px;top:416.5px" width="18" height="16" viewBox="0 0 18 16"><path d="M2.9 3.4H10.6L14.3 7.95L10.6 12.5H2.9L6.3 7.95Z" fill="none" stroke="#42607f" stroke-width="1.3" stroke-linejoin="round"/></svg>
<div class="c" style="left:1808.5px;top:418.1px;font-size:14.5px;color:#2a4a6b">U</div>
<div class="a" style="left:14px;top:461.5px;width:13px;height:13px;border:1px solid #767676;border-radius:2.5px"></div>
<div class="a" style="left:58.19999999999999px;top:458px;width:28.5px;height:28.5px;border-radius:50%;background:#fde2e7;color:#a0525f;font-size:14px;line-height:28.5px;text-align:center;-webkit-text-stroke:.25px #a0525f">B</div>
<div class="c" style="left:93.19999999999999px;top:464px;color:#2d5ccf;font-size:15px">Brajendra B. S. R</div>
<svg style="left:403px;top:463px" width="6" height="18" viewBox="0 0 6 18"><g fill="#36404f"><circle cx="3" cy="3" r="1.5"/><circle cx="3" cy="8.5" r="1.5"/><circle cx="3" cy="14" r="1.5"/></g></svg>
<div class="c" style="left:455.8px;top:463.1px;font-size:14.5px">AF 2025 | Kanpur Le<span style="letter-spacing:-.6px">...</span></div>
<div class="c" style="left:640.1999999999999px;top:463.1px;font-size:14.5px">Brajendra B. S. R</div>
<div class="a" style="left:825.0px;top:470.5px;width:5.4px;height:1.6px;background:#1b3657"></div>
<div class="c" style="left:1008.2px;top:463.1px;font-size:14.5px">27 May, 2025 11:56:5<span style="letter-spacing:-.6px">...</span></div>
<div class="c" style="left:1192.2px;top:463.1px;font-size:14.5px">brajendrabrajendra396@<span style="letter-spacing:-.6px">...</span></div>
<div class="c" style="left:1411.2px;top:463.1px;font-size:14.5px">AF 2025 | Kanpur Le<span style="letter-spacing:-.6px">...</span></div>
<div class="c" style="left:1595.3999999999999px;top:463.1px;font-size:14.5px">Untouched</div>
<div class="a" style="left:1780px;top:457.29999999999995px;width:60px;height:30px;border-radius:5px;background:#dff0fd"></div>
<svg style="left:1788px;top:461.5px" width="18" height="16" viewBox="0 0 18 16"><path d="M2.9 3.4H10.6L14.3 7.95L10.6 12.5H2.9L6.3 7.95Z" fill="none" stroke="#42607f" stroke-width="1.3" stroke-linejoin="round"/></svg>
<div class="c" style="left:1808.5px;top:463.1px;font-size:14.5px;color:#2a4a6b">U</div>
<div class="a" style="left:14px;top:506.5px;width:13px;height:13px;border:1px solid #767676;border-radius:2.5px"></div>
<div class="a" style="left:58.19999999999999px;top:503px;width:28.5px;height:28.5px;border-radius:50%;background:#fafdd8;color:#99a33a;font-size:14px;line-height:28.5px;text-align:center;-webkit-text-stroke:.25px #99a33a">S</div>
<div class="c" style="left:93.19999999999999px;top:509px;color:#2d5ccf;font-size:15px">Suraj</div>
<svg style="left:403px;top:508px" width="6" height="18" viewBox="0 0 6 18"><g fill="#36404f"><circle cx="3" cy="3" r="1.5"/><circle cx="3" cy="8.5" r="1.5"/><circle cx="3" cy="14" r="1.5"/></g></svg>
<div class="a" style="left:456.6px;top:515.5px;width:5.4px;height:1.6px;background:#1b3657"></div>
<div class="c" style="left:640.1999999999999px;top:508.1px;font-size:14.5px">Suraj</div>
<div class="a" style="left:825.0px;top:515.5px;width:5.4px;height:1.6px;background:#1b3657"></div>
<div class="c" style="left:1008.2px;top:508.1px;font-size:14.5px">27 May, 2025 11:46:1<span style="letter-spacing:-.6px">...</span></div>
<div class="a" style="left:1193.0px;top:515.5px;width:5.4px;height:1.6px;background:#1b3657"></div>
<div class="c" style="left:1411.2px;top:508.1px;font-size:14.5px">Admissions Fair LP K<span style="letter-spacing:-.6px">...</span></div>
<div class="c" style="left:1595.3999999999999px;top:508.1px;font-size:14.5px">call Back</div>
<div class="a" style="left:1780px;top:502.29999999999995px;width:60px;height:30px;border-radius:5px;background:#dff0fd"></div>
<svg style="left:1788px;top:506.5px" width="18" height="16" viewBox="0 0 18 16"><path d="M2.9 3.4H10.6L14.3 7.95L10.6 12.5H2.9L6.3 7.95Z" fill="none" stroke="#42607f" stroke-width="1.3" stroke-linejoin="round"/></svg>
<div class="c" style="left:1808.5px;top:508.1px;font-size:14.5px;color:#2a4a6b">A</div>
<div class="a" style="left:14px;top:551.5px;width:13px;height:13px;border:1px solid #767676;border-radius:2.5px"></div>
<div class="a" style="left:58.19999999999999px;top:548px;width:28.5px;height:28.5px;border-radius:50%;background:#c2c2c2;color:#ffffff;font-size:14px;line-height:28.5px;text-align:center;-webkit-text-stroke:.25px #ffffff">N</div>
<div class="c" style="left:93.19999999999999px;top:554px;color:#2d5ccf;font-size:15px">Nupur</div>
<svg style="left:403px;top:553px" width="6" height="18" viewBox="0 0 6 18"><g fill="#36404f"><circle cx="3" cy="3" r="1.5"/><circle cx="3" cy="8.5" r="1.5"/><circle cx="3" cy="14" r="1.5"/></g></svg>
<div class="a" style="left:456.6px;top:560.5px;width:5.4px;height:1.6px;background:#1b3657"></div>
<div class="c" style="left:640.1999999999999px;top:553.1px;font-size:14.5px">Nupur</div>
<div class="a" style="left:825.0px;top:560.5px;width:5.4px;height:1.6px;background:#1b3657"></div>
<div class="c" style="left:1008.2px;top:553.1px;font-size:14.5px">27 May, 2025 11:46:1<span style="letter-spacing:-.6px">...</span></div>
<div class="a" style="left:1193.0px;top:560.5px;width:5.4px;height:1.6px;background:#1b3657"></div>
<div class="a" style="left:1412.0px;top:560.5px;width:5.4px;height:1.6px;background:#1b3657"></div>
<div class="c" style="left:1595.3999999999999px;top:553.1px;font-size:14.5px">Untouched</div>
<div class="a" style="left:1780px;top:547.3px;width:60px;height:30px;border-radius:5px;background:#dff0fd"></div>
<svg style="left:1788px;top:551.5px" width="18" height="16" viewBox="0 0 18 16"><path d="M2.9 3.4H10.6L14.3 7.95L10.6 12.5H2.9L6.3 7.95Z" fill="none" stroke="#42607f" stroke-width="1.3" stroke-linejoin="round"/></svg>
<div class="c" style="left:1808.5px;top:553.1px;font-size:14.5px;color:#2a4a6b">U</div>
<div class="a" style="left:14px;top:596.5px;width:13px;height:13px;border:1px solid #767676;border-radius:2.5px"></div>
<div class="a" style="left:58.19999999999999px;top:593px;width:28.5px;height:28.5px;border-radius:50%;background:#d5f6fc;color:#3f8e9a;font-size:14px;line-height:28.5px;text-align:center;-webkit-text-stroke:.25px #3f8e9a">P</div>
<div class="c" style="left:93.19999999999999px;top:599px;color:#2d5ccf;font-size:15px">Preesha</div>
<svg style="left:403px;top:598px" width="6" height="18" viewBox="0 0 6 18"><g fill="#36404f"><circle cx="3" cy="3" r="1.5"/><circle cx="3" cy="8.5" r="1.5"/><circle cx="3" cy="14" r="1.5"/></g></svg>
<div class="a" style="left:456.6px;top:605.5px;width:5.4px;height:1.6px;background:#1b3657"></div>
<div class="c" style="left:640.1999999999999px;top:598.1px;font-size:14.5px">Preesha</div>
<div class="a" style="left:825.0px;top:605.5px;width:5.4px;height:1.6px;background:#1b3657"></div>
<div class="c" style="left:1008.2px;top:598.1px;font-size:14.5px">27 May, 2025 11:45:4<span style="letter-spacing:-.6px">...</span></div>
<div class="a" style="left:1193.0px;top:605.5px;width:5.4px;height:1.6px;background:#1b3657"></div>
<div class="c" style="left:1411.2px;top:598.1px;font-size:14.5px">Admissions Fair LP K<span style="letter-spacing:-.6px">...</span></div>
<div class="c" style="left:1595.3999999999999px;top:598.1px;font-size:14.5px">Interested</div>
<div class="a" style="left:1780px;top:592.3px;width:60px;height:30px;border-radius:5px;background:#dff0fd"></div>
<svg style="left:1788px;top:596.5px" width="18" height="16" viewBox="0 0 18 16"><path d="M2.9 3.4H10.6L14.3 7.95L10.6 12.5H2.9L6.3 7.95Z" fill="none" stroke="#42607f" stroke-width="1.3" stroke-linejoin="round"/></svg>
<div class="c" style="left:1808.5px;top:598.1px;font-size:14.5px;color:#2a4a6b">W</div>
</div>
<div class="a" style="left:88px;top:848px;width:1692px;height:4px;border-radius:2px;background:#7a7f8a"></div>
<div class="a" style="left:81px;top:273px;width:225px;height:180px;border-radius:8px;background:#fff"></div>
<div class="a" style="left:83px;top:275px;width:221px;height:176px;border-radius:6px;background:#211c52;overflow:hidden"><div class="a" style="left:0;top:0;width:221px;height:51px;background:#25205a"></div></div>
<div class="t" style="left:96.5px;top:298.3px;font-size:16.3px;letter-spacing:.2px;-webkit-text-stroke:.45px #fff;color:#fff">Contacts</div>
<div class="t" style="left:96.5px;top:336.2px;font-size:16.3px;letter-spacing:.2px;-webkit-text-stroke:.45px #fff;color:#fff">Marketing List</div>
<div class="t" style="left:96.5px;top:373.5px;font-size:16.3px;letter-spacing:.2px;-webkit-text-stroke:.45px #fff;color:#fff">Segments</div>
<div class="t" style="left:96.5px;top:410.7px;font-size:16.3px;letter-spacing:.2px;-webkit-text-stroke:.45px #fff;color:#fff">Companies</div>
<div class="t" style="left:87px;top:873.5px;font-size:14.3px;letter-spacing:.6px;color:#1f2430">Total 54305 Contacts</div>
<svg style="left:262;top:872" width="16" height="18" viewBox="0 0 16 18"><path d="M11 3l-5.6 6.4l5.6 6.4" fill="none" stroke="#a0a0a2" stroke-width="2.2"/></svg>
<div class="a" style="left:296px;top:862.8px;width:36px;height:36px;border-radius:6px;background:#211c52"></div>
<div class="t" style="left:296px;top:873px;width:36px;text-align:center;font-size:15px;-webkit-text-stroke:.3px #fff;color:#fff">1</div>
<div class="t" style="left:326.4px;top:873px;width:60px;text-align:center;font-size:15px;color:#161a22">2</div>
<div class="t" style="left:368.8px;top:873px;width:60px;text-align:center;font-size:15px;color:#161a22">3</div>
<div class="t" style="left:411.4px;top:873px;width:60px;text-align:center;font-size:15px;color:#161a22">4</div>
<div class="t" style="left:454px;top:873px;width:60px;text-align:center;font-size:15px;color:#161a22">5</div>
<div class="t" style="left:497.5px;top:873px;width:60px;text-align:center;font-size:15px;color:#161a22"><span style="letter-spacing:-1.2px">...</span></div>
<div class="t" style="left:545px;top:873px;width:60px;text-align:center;font-size:15px;color:#161a22">1087</div>
<svg style="left:614;top:872" width="16" height="18" viewBox="0 0 16 18"><path d="M5.3 3l5.6 6.2l-5.6 6.2" fill="none" stroke="#1c1c22" stroke-width="2.4"/></svg>
<div class="a" style="left:661px;top:861px;width:157.5px;height:40.5px;border-radius:6px;background:#fff"></div>
<div class="t" style="left:672.5px;top:873px;font-size:15px;color:#1f2430">50 per page</div>
<svg style="left:790;top:874" width="16" height="14" viewBox="0 0 16 14"><path d="M2.2 4.3l5.8 5.4l5.8-5.4" fill="none" stroke="#c4c5ca" stroke-width="2"/></svg>
</body></html>
